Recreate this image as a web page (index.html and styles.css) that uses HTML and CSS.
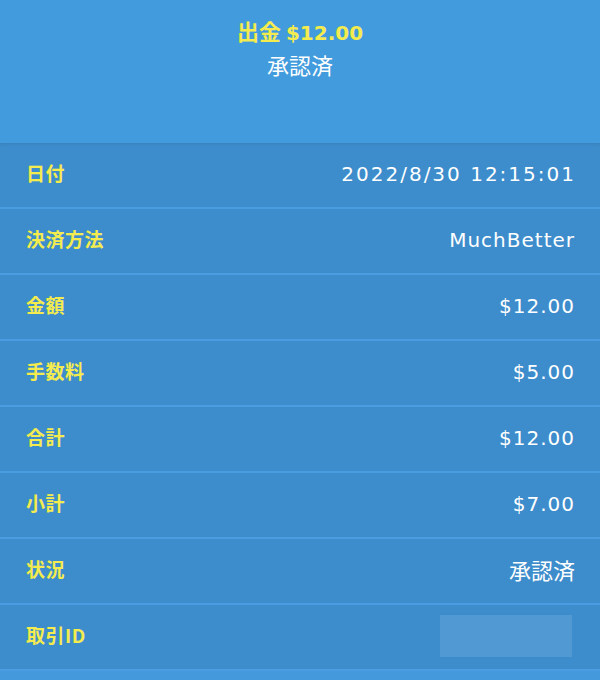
FILE: index.html
```html
<!DOCTYPE html>
<html lang="ja">
<head>
    <meta charset="UTF-8">
    <meta name="viewport" content="width=device-width, initial-scale=1.0">
    <title>出金</title>
    <link rel="stylesheet" href="styles.css">
</head>
<body>
    <!-- Header with amount and status -->
    <div class="summary">
        <div class="summary-title">出金 <span class="summary-amount">$12.00</span></div>
        <div class="summary-status">承認済</div>
    </div>

    <!-- Details list -->
    <div class="details">
        <div class="row">
            <span class="label">日付</span>
            <span class="value value-date">2022/8/30 12:15:01</span>
        </div>
        <div class="row">
            <span class="label">決済方法</span>
            <span class="value">MuchBetter</span>
        </div>
        <div class="row">
            <span class="label">金額</span>
            <span class="value">$12.00</span>
        </div>
        <div class="row">
            <span class="label">手数料</span>
            <span class="value">$5.00</span>
        </div>
        <div class="row">
            <span class="label">合計</span>
            <span class="value">$12.00</span>
        </div>
        <div class="row">
            <span class="label">小計</span>
            <span class="value">$7.00</span>
        </div>
        <div class="row">
            <span class="label">状況</span>
            <span class="value value-cjk">承認済</span>
        </div>
        <div class="row">
            <span class="label">取引ID</span>
            <span class="value-hidden"></span>
        </div>
    </div>
</body>
</html>
```

FILE: styles.css
```css
body {
    margin: 0;
    background-color: #4499dc;
    font-family: "DejaVu Sans", "Noto Sans CJK JP", sans-serif;
    width: 600px;
    height: 680px;
    overflow: hidden;
}

.summary {
    height: 143px;
    padding-top: 16px;
    box-sizing: border-box;
    text-align: center;
    background-color: #429bdd;
}

.summary-title {
    color: #f4ec4e;
    font-family: "Noto Sans CJK JP", sans-serif;
    font-weight: bold;
    font-size: 22px;
    line-height: 28px;
}

.summary-amount {
    font-family: "DejaVu Sans", sans-serif;
    font-size: 20px;
}

.summary-status {
    color: #ffffff;
    font-family: "Noto Sans CJK JP", sans-serif;
    font-size: 22px;
    line-height: 28px;
    margin-top: 3px;
}

.details {
    background-color: #3d8ccb;
    box-shadow: inset 0 3px 3px -2px rgba(0, 0, 0, 0.08);
}

.row {
    display: flex;
    justify-content: space-between;
    align-items: center;
    height: 64px;
    padding: 0 25px 0 26px;
    border-bottom: 2px solid #4a9de0;
}

.label {
    color: #f4ec4e;
    font-family: "Noto Sans CJK JP", sans-serif;
    font-weight: bold;
    font-size: 19px;
    letter-spacing: 0.5px;
    margin-top: -5px;
}

.value {
    color: #ffffff;
    font-size: 20px;
    letter-spacing: 1px;
    margin-top: -2px;
}

.value-date {
    letter-spacing: 2px;
    margin-right: -1px;
}

.value-cjk {
    font-family: "Noto Sans CJK JP", sans-serif;
    font-size: 22px;
    letter-spacing: 0;
    margin-top: -4px;
}

.value-hidden {
    width: 132px;
    height: 42px;
    margin-right: 3px;
    margin-top: -2px;
    background-color: #5199d3;
}
```
